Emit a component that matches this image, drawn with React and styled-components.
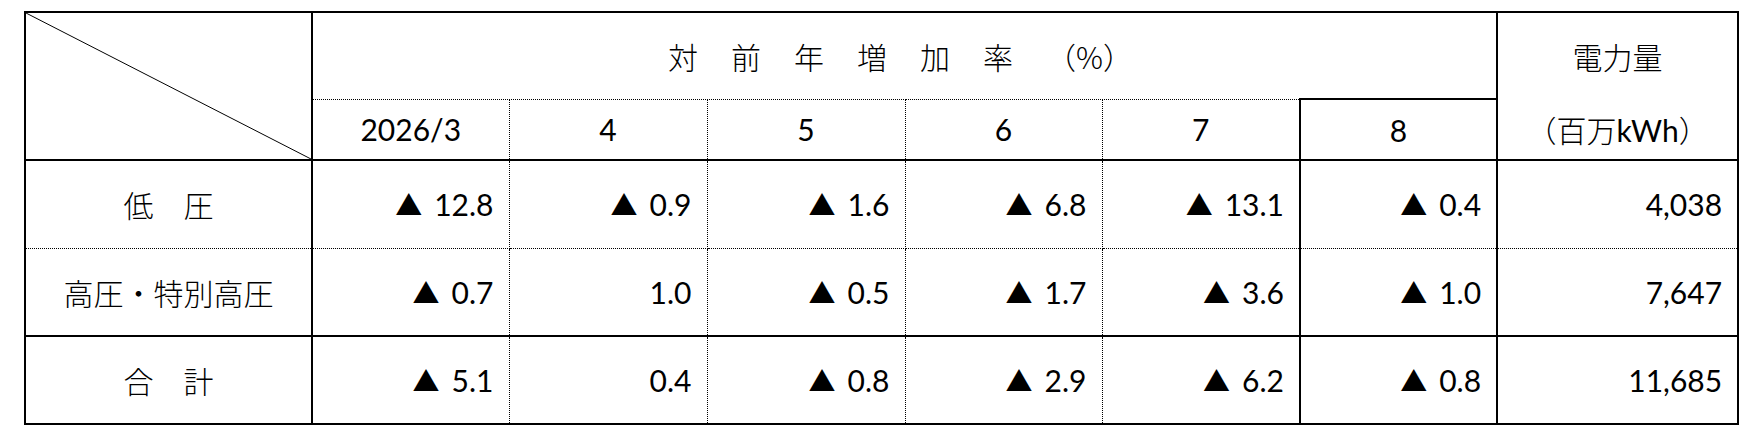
import React from "react";
import styled, { createGlobalStyle } from "styled-components";

const Global = createGlobalStyle`
  html, body { margin: 0; padding: 0; background: #fff; }
  body { font-family: "Lato", "Noto Sans CJK JP", sans-serif; color: #000; }
`;

const line = (k) =>
  k === "s" ? "2px solid #000" : k === "d" ? "1px dotted #000" : "none";

const Page = styled.div`
  padding: 11px 0 0 24px;
`;

const Table = styled.table`
  border-collapse: collapse;
  table-layout: fixed;
  width: 1715px;
  border: 2px solid #000;
`;

const Row = styled.tr`
  height: ${(p) => p.$h}px;
`;

const Cell = styled.td`
  position: relative;
  padding: 0 ${(p) => p.$pr || 0}px 0 0;
  text-align: ${(p) => p.$align || "center"};
  vertical-align: middle;
  line-height: 1;
  border-top: ${(p) => line(p.$t)};
  border-right: ${(p) => line(p.$r)};
  border-bottom: ${(p) => line(p.$b)};
  border-left: ${(p) => line(p.$l)};
`;

const Jp = styled.span`
  font-family: "Noto Sans CJK JP", sans-serif;
  font-size: 30px;
  font-weight: 300;
  letter-spacing: ${(p) => p.$ls || 0}px;
`;

const Num = styled.span`
  font-family: "Lato", sans-serif;
  font-size: 30px;
  font-weight: 400;
`;

const Tri = styled.span`
  font-family: "Noto Sans CJK JP", sans-serif;
  font-size: 27px;
  margin-right: 12px;
`;

const Diagonal = styled.svg`
  position: absolute;
  inset: 0;
  width: 100%;
  height: 100%;
  display: block;
`;

const Stack = styled.div`
  display: grid;
  grid-template-rows: 86px 60px;
  align-items: center;
  justify-items: center;
`;

const months = ["2026/3", "4", "5", "6", "7", "8"];

const data = [
  { label: "低　圧", vals: ["-12.8", "-0.9", "-1.6", "-6.8", "-13.1", "-0.4"], total: "4,038", b: "d" },
  { label: "高圧・特別高圧", vals: ["-0.7", "1.0", "-0.5", "-1.7", "-3.6", "-1.0"], total: "7,647", b: "s" },
  { label: "合　計", vals: ["-5.1", "0.4", "-0.8", "-2.9", "-6.2", "-0.8"], total: "11,685", b: "s" },
];

const widths = [287, 197, 198, 198, 197, 198, 197, 241];

const rightOf = (i) => (i >= 4 ? "s" : "d");

function Value({ v }) {
  const neg = v.startsWith("-");
  return (
    <>
      {neg && <Tri>▲</Tri>}
      <Num>{neg ? v.slice(1) : v}</Num>
    </>
  );
}

export default function App() {
  return (
    <Page>
      <Global />
      <Table>
        <colgroup>
          {widths.map((w, i) => (
            <col key={i} style={{ width: w }} />
          ))}
        </colgroup>
        <tbody>
          <Row $h={86}>
            <Cell rowSpan={2} $r="s" $b="s">
              <Diagonal viewBox="0 0 100 100" preserveAspectRatio="none">
                <line x1="0" y1="0" x2="100" y2="100" stroke="#000" strokeWidth="1" vectorEffect="non-scaling-stroke" />
              </Diagonal>
            </Cell>
            <Cell colSpan={6} $b="d" $pr={8}>
              <Jp $ls={33}>対前年増加率</Jp>
              <Jp>（%）</Jp>
            </Cell>
            <Cell rowSpan={2} $l="s" $b="s">
              <Stack>
                <Jp>電力量</Jp>
                <Jp>（百万<Num>kWh</Num>）</Jp>
              </Stack>
            </Cell>
          </Row>
          <Row $h={60}>
            {months.map((m, i) => (
              <Cell key={m} $t={i === 5 ? "s" : "d"} $r={rightOf(i)} $l={i === 5 ? "s" : undefined} $b="s">
                <Num>{m}</Num>
              </Cell>
            ))}
          </Row>
          {data.map((r) => (
            <Row key={r.label} $h={88}>
              <Cell $r="s" $b={r.b}>
                <Jp>{r.label}</Jp>
              </Cell>
              {r.vals.map((v, i) => (
                <Cell key={i} $align="right" $pr={15} $r={rightOf(i)} $b={r.b}>
                  <Value v={v} />
                </Cell>
              ))}
              <Cell $align="right" $pr={15} $l="s" $b={r.b}>
                <Num>{r.total}</Num>
              </Cell>
            </Row>
          ))}
        </tbody>
      </Table>
    </Page>
  );
}
